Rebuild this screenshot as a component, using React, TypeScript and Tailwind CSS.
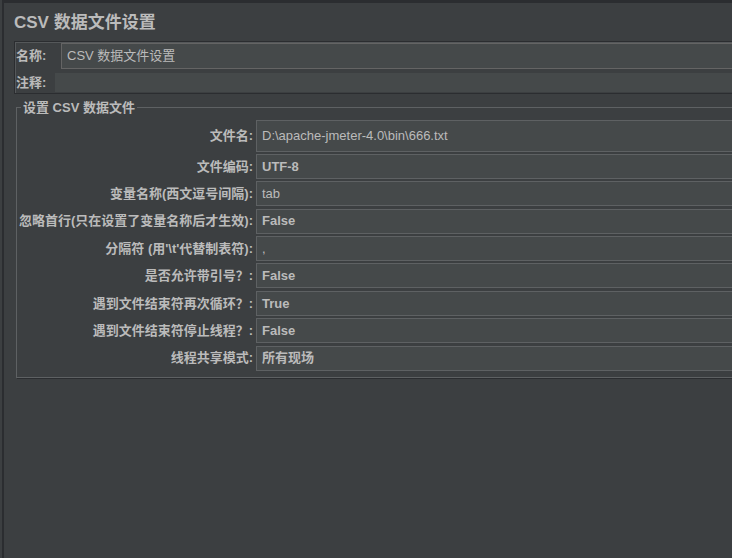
const FONT = { fontFamily: '"Liberation Sans", "Noto Sans CJK SC", sans-serif' };

type Row = { label: string; value: string; bold?: boolean; tall?: boolean };

const ROWS: Row[] = [
  { label: "文件名:", value: "D:\\apache-jmeter-4.0\\bin\\666.txt", tall: true },
  { label: "文件编码:", value: "UTF-8", bold: true },
  { label: "变量名称(西文逗号间隔):", value: "tab" },
  { label: "忽略首行(只在设置了变量名称后才生效):", value: "False", bold: true },
  { label: "分隔符 (用'\\t'代替制表符):", value: "," },
  { label: "是否允许带引号？:", value: "False", bold: true },
  { label: "遇到文件结束符再次循环？:", value: "True", bold: true },
  { label: "遇到文件结束符停止线程？:", value: "False", bold: true },
  { label: "线程共享模式:", value: "所有现场", bold: true },
];

export default function App() {
  return (
    <div className="w-[732px] h-[558px] bg-[#3c3f41] overflow-hidden text-[#bbbbbb]" style={FONT}>
      <div className="ml-[2px] h-full border-l-2 border-t-[3px] border-[#2b2d30] flex flex-col">
        {/* Title */}
        <div className="pl-[10px] pt-[9px] h-[38px] text-[17px] font-bold leading-[22px]">CSV 数据文件设置</div>

        {/* Name / comment panel */}
        <div className="ml-[10px] -mr-4 border border-[#2b2d30] shadow-[inset_1px_1px_0_#55585a] text-[13px]">
          <div className="flex items-center pt-px">
            <span className="w-[46px] pl-px font-bold">名称:</span>
            <div className="flex-1 h-[26px] bg-[#45494a] border border-[#646464] flex items-center pl-[5px]">
              CSV 数据文件设置
            </div>
          </div>
          <div className="flex items-center mt-[4px]">
            <span className="w-[40px] pl-px font-bold">注释:</span>
            <div className="flex-1 h-[19px] bg-[#45494a]" />
          </div>
        </div>

        {/* CSV data set fieldset */}
        <fieldset className="ml-[12px] -mr-4 mt-[6px] border border-[#5e6163] shadow-[1px_1px_0_#2b2d30] pb-[6px] text-[13px]">
          <legend className="ml-[4px] px-[2px] font-bold leading-[16px]">设置 CSV 数据文件</legend>
          <div className="grid grid-cols-[239px_1fr] gap-y-[2.4px] mt-[4px]">
            {ROWS.map(r => (
              <div key={r.label} className="contents">
                <div className="flex items-center justify-end pr-[3px] font-bold whitespace-nowrap">{r.label}</div>
                <div
                  className={`${r.tall ? "h-[32px]" : "h-[25px]"} bg-[#45494a] border border-[#5e6163] flex items-center pl-[5px] ${
                    r.bold ? "font-bold" : ""
                  }`}
                >
                  {r.value}
                </div>
              </div>
            ))}
          </div>
        </fieldset>
      </div>
    </div>
  );
}
